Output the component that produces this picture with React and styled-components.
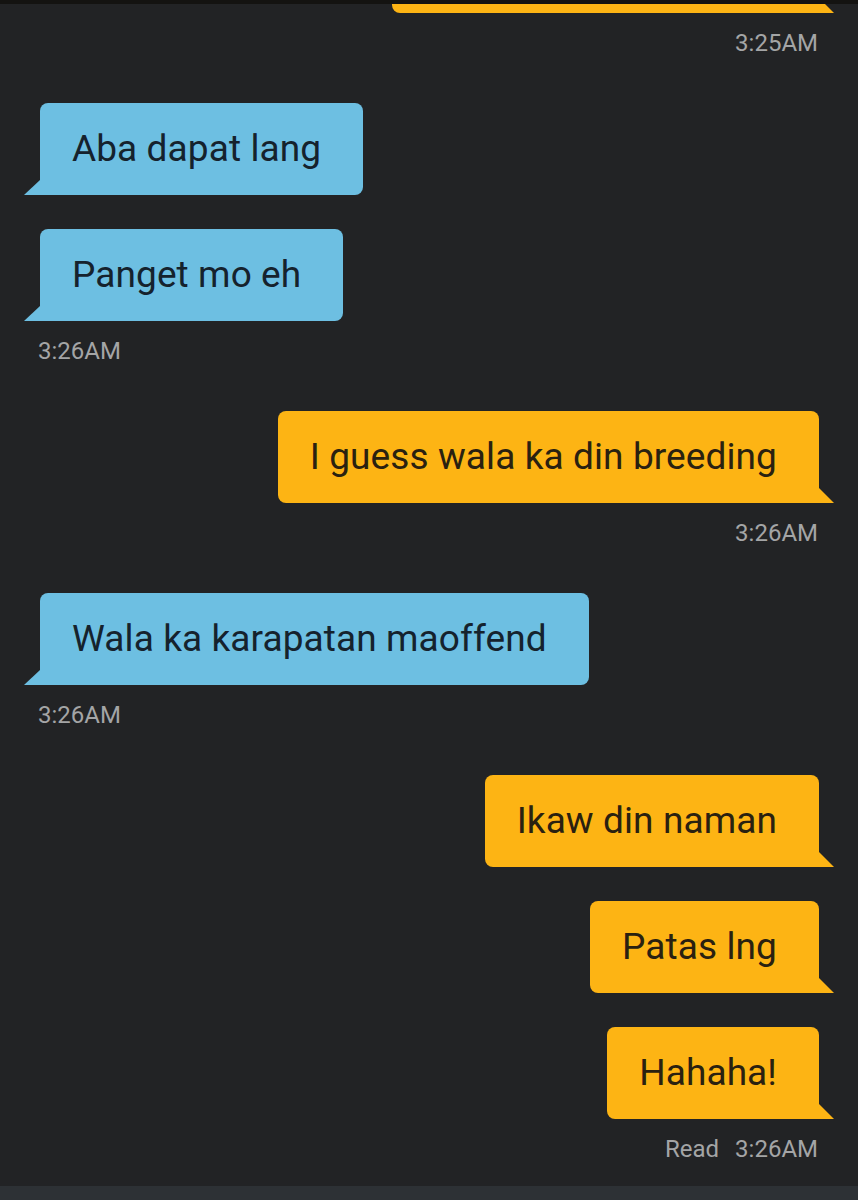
import styled, { createGlobalStyle, css } from 'styled-components';

const GlobalStyle = createGlobalStyle`
  html, body {
    margin: 0;
    padding: 0;
    background: #222325;
  }
  body {
    font-family: Roboto, "Noto Sans", sans-serif;
  }
`;

const groups = [
  { side: 'out', messages: [''], time: '3:25AM', clipped: true },
  { side: 'in', messages: ['Aba dapat lang', 'Panget mo eh'], time: '3:26AM' },
  { side: 'out', messages: ['I guess wala ka din breeding'], time: '3:26AM' },
  { side: 'in', messages: ['Wala ka karapatan maoffend'], time: '3:26AM' },
  {
    side: 'out',
    messages: ['Ikaw din naman', 'Patas lng', 'Hahaha!'],
    time: '3:26AM',
    read: true,
  },
];

function App() {
  return (
    <>
      <GlobalStyle />
      <Screen>
        <TopStrip />
        <Messages>
          {groups.map((group, i) => (
            <Group key={i} $side={group.side}>
              {group.messages.map((text, j) => (
                <Bubble key={j} $side={group.side} $clipped={group.clipped}>
                  {text}
                </Bubble>
              ))}
              <Time>
                {group.read && <ReadLabel>Read</ReadLabel>}
                {group.time}
              </Time>
            </Group>
          ))}
        </Messages>
        <BottomBar />
      </Screen>
    </>
  );
}

const Screen = styled.div`
  display: flex;
  flex-direction: column;
  width: 858px;
  height: 1200px;
  overflow: hidden;
  background: #222325;
`;

const TopStrip = styled.div`
  height: 4px;
  background: #141311;
  flex-shrink: 0;
`;

const Messages = styled.div`
  flex: 1;
  overflow: hidden;
  display: flex;
  flex-direction: column;
  gap: 45px;
  padding: 0 39px 0 40px;
`;

const Group = styled.div`
  display: flex;
  flex-direction: column;
  gap: 34px;
  align-items: ${(p) => (p.$side === 'out' ? 'flex-end' : 'flex-start')};
`;

const Bubble = styled.div`
  position: relative;
  box-sizing: border-box;
  height: 92px;
  display: flex;
  align-items: center;
  padding: 0 42px 2px 32px;
  font-size: 37px;
  letter-spacing: 0.1px;
  white-space: nowrap;

  ${(p) =>
    p.$side === 'out'
      ? css`
          background: #fdb414;
          color: #2a2110;
          border-radius: 8px 8px 0 8px;
          &::after {
            content: '';
            position: absolute;
            right: -15px;
            bottom: 0;
            border-bottom: 15px solid #fdb414;
            border-right: 15px solid transparent;
          }
        `
      : css`
          background: #6dbfe2;
          color: #15222d;
          border-radius: 8px 8px 8px 0;
          &::after {
            content: '';
            position: absolute;
            left: -16px;
            bottom: 0;
            border-bottom: 15px solid #6dbfe2;
            border-left: 16px solid transparent;
          }
        `}

  ${(p) =>
    p.$clipped &&
    css`
      width: 427px;
      margin-top: -83px;
    `}
`;

const Time = styled.div`
  margin-top: -19px;
  line-height: 30px;
  font-size: 24px;
  color: #a4a5a6;
  padding: 0 1px 0 0;
  margin-left: -2px;
`;

const ReadLabel = styled.span`
  margin-right: 16px;
`;

const BottomBar = styled.div`
  height: 14px;
  flex-shrink: 0;
  background: #2d3135;
`;

export default App;
